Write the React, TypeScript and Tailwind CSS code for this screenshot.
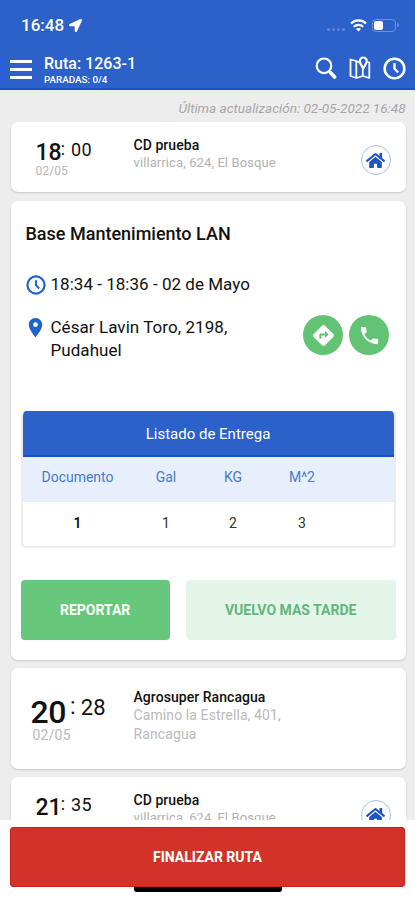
import React from "react";
import { FaHome, FaLocationArrow } from "react-icons/fa";
import { MdDirections, MdLocationOn, MdPhone } from "react-icons/md";

function SearchIcon() {
  return (
    <svg width="22" height="24" viewBox="0 0 22 24" fill="none" stroke="white">
      <circle cx="9" cy="9.8" r="7.3" strokeWidth="2.2" />
      <path d="M14.2 15.4 L15.4 16.6" strokeWidth="2.2" />
      <path d="M15.6 16.8 L19.6 21" strokeWidth="3.6" strokeLinecap="round" />
    </svg>
  );
}

function MapIcon() {
  return (
    <svg width="22" height="24" viewBox="0 0 22 24" fill="none" stroke="white" strokeWidth="1.8" strokeLinejoin="round">
      <path d="M10 6.5 L7.3 5 L1.5 3.5 V20 L7.3 22 L13.8 20 L20.3 22 V6.5 L18.4 6" />
      <path d="M7.3 5 V22 M13.8 12.5 V20" />
      <path d="M14.2 12.6 C12.8 9.6 10.9 7.8 10.9 4.9 A3.4 3.4 0 0 1 17.7 4.9 C17.7 7.8 15.6 9.6 14.2 12.6 Z" strokeWidth="2.2" />
    </svg>
  );
}

function ClockIcon({ size, color }: { size: number; color: string }) {
  return (
    <svg width={size} height={size} viewBox="0 0 24 24" fill="none" stroke={color}>
      <circle cx="12" cy="12" r="10.3" strokeWidth="2.6" />
      <path d="M12 6.2 V12.2 L15.8 16.2" strokeWidth="2.4" />
    </svg>
  );
}

function HomeBadge() {
  return (
    <div className="flex h-[30px] w-[30px] items-center justify-center rounded-full border border-[#a9bee6]">
      <FaHome size={19} color="#1d55c4" />
    </div>
  );
}

interface StopProps {
  hour: string;
  minute: string;
  title: string;
  address: string[];
  home?: boolean;
  large?: boolean;
}

function StopCard({ hour, minute, title, address, home, large }: StopProps) {
  return (
    <section
      className={
        large
          ? "flex h-[101px] rounded-[7px] bg-white pt-[20px] shadow-[0_1px_2px_#c6c6c6]"
          : "flex h-[70px] rounded-[7px] bg-white pt-[14px] shadow-[0_1px_2px_#c6c6c6]"
      }
    >
      <div className={large ? "w-[123px] pl-[20px] pt-[6px]" : "w-[123px] pl-[25px] pt-px"}>
        <div className="flex items-start leading-none">
          <span className={large ? "mt-[2px] text-[32px] leading-[32px] font-medium tracking-[-0.4px]" : "mt-[4px] text-[23px] leading-[23px] font-medium"}>
            {hour}
          </span>
          <span className={large ? "ml-[4px] text-[23px] leading-[26px]" : "-ml-[1px] text-[18px] leading-[24px]"}>:</span>
          <span className={large ? "ml-[5px] text-[22px] leading-[28px] tracking-[0.3px]" : "ml-[6px] text-[18px] leading-[25px] tracking-[0.3px]"}>{minute}</span>
        </div>
        <div
          className={
            large
              ? "pl-[2px] text-[14px] leading-[14px] tracking-[0.2px] text-[#b9b9b9]"
              : "text-[12px] leading-[14px] tracking-[0.1px] text-[#b9b9b9]"
          }
        >
          02/05
        </div>
      </div>
      <div className="flex-1">
        <h3 className="text-[14px] leading-[18px] font-medium tracking-[0.05px]">{title}</h3>
        <div className={large ? "text-[14px] leading-[19px] tracking-[0.1px] text-[#bababa]" : "text-[13px] leading-[18px] tracking-[0.1px] text-[#b2b2b2]"}>
          {address.map((line) => (
            <p key={line}>{line}</p>
          ))}
        </div>
      </div>
      {home && (
        <div className="mr-[15px] mt-[9px]">
          <HomeBadge />
        </div>
      )}
    </section>
  );
}

export default function App() {
  return (
    <div className="flex h-[900px] w-[415px] flex-col overflow-hidden bg-[#ededed] font-['Roboto',sans-serif] text-[#111]">
      <header className="h-[90px] shrink-0 border-b-2 border-[#1355c9] bg-[#2c61c9] text-white">
        <div className="flex h-[50px] items-center pl-[21px] pr-[16px]">
          <span className="text-[17px] leading-none font-medium">16:48</span>
          <FaLocationArrow className="ml-[5px]" size={13} />
          <div className="ml-auto flex items-center">
            <div className="mt-[8px] flex gap-[2px]">
              {[0, 1, 2, 3].map((dot) => (
                <i key={dot} className="h-[3px] w-[3px] rounded-full bg-[#6285d6]" />
              ))}
            </div>
            <svg className="ml-[5px]" width="17" height="13" viewBox="0 0 17 13" fill="none" stroke="white" strokeWidth="2.2">
              <path d="M1 4.6 C5 .4 12 .4 16 4.6" />
              <path d="M3.8 7.7 C6.4 5.2 10.6 5.2 13.2 7.7" />
              <path d="M6 9.9 C7.5 8.7 9.5 8.7 11 9.9 L8.5 12.4 Z" fill="white" stroke="none" />
            </svg>
            <div className="ml-[5px] h-[13px] w-[24px] rounded-[4px] border border-[#6f91da] p-px">
              <div className="h-full w-[9px] rounded-[2px] bg-white" />
            </div>
            <i className="ml-px h-[4px] w-[2px] rounded-r bg-[#6f91da]" />
          </div>
        </div>
        <div className="flex h-[38px] pl-[10px]">
          <div className="flex w-[22px] flex-col gap-[5px] pt-[10px]">
            <i className="h-[3px] bg-white" />
            <i className="h-[3px] bg-white" />
            <i className="h-[3px] bg-white" />
          </div>
          <div className="pl-[12px] pt-[4px]">
            <h1 className="text-[16px] leading-[19px] font-medium">Ruta: 1263-1</h1>
            <p className="text-[9.8px] leading-[14px] font-medium">PARADAS: 0/4</p>
          </div>
          <div className="ml-auto flex pr-[9px] pt-[6px]">
            <SearchIcon />
            <div className="ml-[12px]">
              <MapIcon />
            </div>
            <div className="ml-[12px] mt-px">
              <ClockIcon size={23} color="white" />
            </div>
          </div>
        </div>
      </header>

      <main className="h-[730px] shrink-0 overflow-hidden pr-[9.5px] pl-[10.5px]">
        <p className="h-[32px] pt-[10px] text-right text-[13.5px] leading-[17px] text-[#a6a6a6] italic">Última actualización: 02-05-2022 16:48</p>
        <div className="flex flex-col gap-[9px]">
          <StopCard hour="18" minute="00" title="CD prueba" address={["villarrica, 624, El Bosque"]} home />

          <section className="-mb-px h-[459px] rounded-[7px] bg-white px-[10px] pt-[22px] shadow-[0_1px_2px_#c6c6c6]">
            <h2 className="pl-[5px] text-[18px] leading-[22px] font-medium">Base Mantenimiento LAN</h2>
            <div className="mt-[28px] flex h-[24px] items-center pl-[5px]">
              <ClockIcon size={20} color="#1d63c9" />
              <p className="ml-[5px] text-[17px] tracking-[0.03px]">18:34 - 18:36 - 02 de Mayo</p>
            </div>
            <div className="mt-[16px] flex">
              <MdLocationOn className="ml-[3px] mt-[3px] shrink-0" size={23} color="#1d63c9" />
              <div className="ml-[4px] pt-[3px] text-[17px] leading-[23px] tracking-[0.06px]">
                <p>César Lavin Toro, 2198,</p>
                <p>Pudahuel</p>
              </div>
              <div className="ml-auto mr-[6.5px] mt-[2px] flex gap-[6px] text-white">
                <div className="flex h-[40px] w-[40px] items-center justify-center rounded-full bg-[#63c375]">
                  <MdDirections size={25} />
                </div>
                <div className="flex h-[40px] w-[40px] items-center justify-center rounded-full bg-[#63c375]">
                  <MdPhone size={23} />
                </div>
              </div>
            </div>

            <div className="mt-[49px] h-[137px] w-[375px] overflow-hidden rounded-[5px] border-2 border-t-0 border-[#ececec]">
              <div className="-mx-px h-[46px] border-b-2 border-[#1355c9] bg-[#2c61c9] text-center text-[15px] leading-[47px] text-white">
                Listado de Entrega
              </div>
              <div className="-mr-[2px] grid h-[45px] grid-cols-[110px_67px_67px_71px_58px] bg-[#e8effc] text-center text-[14px] leading-[40px] text-[#467bcb]">
                <span>Documento</span>
                <span>Gal</span>
                <span>KG</span>
                <span>M^2</span>
              </div>
              <div className="grid h-[44px] grid-cols-[110px_67px_67px_71px_56px] text-center text-[14px] leading-[42px] text-[#333]">
                <span className="font-medium text-black">1</span>
                <span>1</span>
                <span>2</span>
                <span>3</span>
              </div>
            </div>

            <div className="mt-[32px] flex gap-[16px]">
              <button className="h-[60px] w-[149.5px] rounded-[4px] bg-[#67c87b] text-[14px] font-bold text-white">REPORTAR</button>
              <button className="h-[60px] w-[210px] rounded-[4px] bg-[#e3f5e9] text-[14px] font-bold text-[#62b67b]">VUELVO MAS TARDE</button>
            </div>
          </section>

          <StopCard hour="20" minute="28" title="Agrosuper Rancagua" address={["Camino la Estrella, 401,", "Rancagua"]} large />
          <div className="-mt-px">
            <StopCard hour="21" minute="35" title="CD prueba" address={["villarrica, 624, El Bosque"]} home />
          </div>
        </div>
      </main>

      <footer className="flex h-[80px] shrink-0 flex-col items-center bg-white pt-[7px]">
        <button className="h-[60px] w-[395px] rounded-[3px] border border-[#c9201f] bg-[#d13328] text-[14px] font-bold text-white">FINALIZAR RUTA</button>
        <div className="h-[5px] w-[148px] rounded-b-[3px] bg-black" />
      </footer>
    </div>
  );
}
